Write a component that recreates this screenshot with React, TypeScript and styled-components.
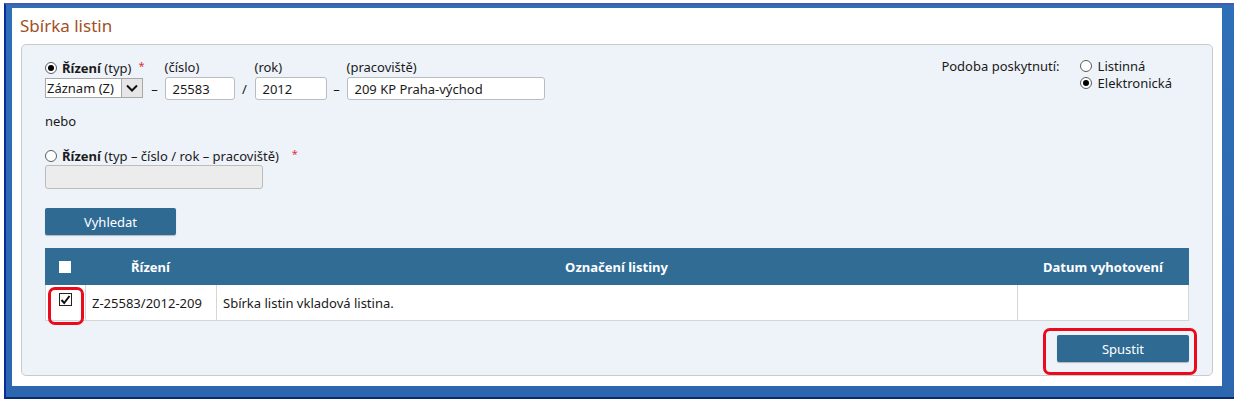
import styled, { createGlobalStyle } from "styled-components";

const GlobalStyle = createGlobalStyle`
  html, body {
    margin: 0;
    padding: 0;
    background: #ffffff;
  }

  body {
    font-family: "Noto Sans", "Open Sans", sans-serif;
    font-size: 13px;
    color: #1a1a1a;
  }
`;

const Frame = styled.div`
  margin: 3px 2px 0 4px;
  height: 396px;
  box-sizing: border-box;

  padding: 3px 12px 11px 6px;

  background: linear-gradient(180deg, #2f6fb7 0%, #2c66ae 100%);
  border-top: 2px solid #4c58b0;
  border-left: 2px solid #0c2a9a;
  border-bottom: 2px solid #0b2a6c;
`;

const Window = styled.div`
  display: flex;
  flex-direction: column;

  height: 100%;
  box-sizing: border-box;
  padding: 6px 9px 10px 9px;

  background-color: white;
`;

const Title = styled.div`
  height: 31px;
  margin-left: -1px;

  font-size: 17px;
  color: #a2501e;
`;

const Panel = styled.div`
  flex: 1;

  display: flex;
  flex-direction: column;

  padding: 14px 23px 13px 23px;

  background-color: #eef3f9;
  border: 1px solid #c9cacc;
  border-radius: 5px;
`;

const TopRow = styled.div`
  display: flex;
  justify-content: space-between;
  align-items: flex-start;
`;

const Fields = styled.div`
  display: flex;
  align-items: flex-end;
`;

const Field = styled.div`
  display: flex;
  flex-direction: column;
  gap: 2px;
`;

const Label = styled.div`
  display: flex;
  align-items: center;
  gap: 3px;

  height: 16px;
  line-height: 16px;
  white-space: nowrap;
`;

const Strong = styled.b`
  font-weight: 700;
`;

const Required = styled.span`
  margin-left: 4px;

  color: #d9363e;
  font-size: 11px;
  position: relative;
  top: -2px;
`;

const Separator = styled.div`
  width: 20px;
  height: 23px;

  display: flex;
  align-items: center;
  justify-content: center;
`;

interface InputProps {
  width: number;
}

const TextInput = styled.div<InputProps>`
  display: flex;
  align-items: center;

  width: ${({ width }) => width}px;
  height: 23px;
  box-sizing: border-box;
  padding-left: 7px;

  background-color: white;
  border: 1px solid #b9bcc0;
  border-radius: 3px;
`;

const Select = styled.div`
  display: flex;
  align-items: stretch;

  width: 98px;
  height: 20px;
  margin-bottom: 2px;
  box-sizing: border-box;

  background-color: white;
  border: 1px solid #a8a8a8;
`;

const SelectText = styled.div`
  flex: 1;
  display: flex;
  align-items: center;
  padding-left: 1px;
`;

const SelectButton = styled.div`
  display: flex;
  align-items: center;
  justify-content: center;

  width: 20px;

  background-color: #e6e6e6;
  border-left: 1px solid #a8a8a8;
`;

const RadioCircle = styled.span<{ checked: boolean }>`
  position: relative;
  display: inline-block;
  flex-shrink: 0;

  width: 12px;
  height: 12px;
  box-sizing: border-box;
  margin-right: 2px;

  background-color: white;
  border: 1px solid #5c5c5c;
  border-radius: 50%;

  &::after {
    content: "";
    display: ${({ checked }) => (checked ? "block" : "none")};
    position: absolute;
    left: 2px;
    top: 2px;
    width: 6px;
    height: 6px;
    border-radius: 50%;
    background-color: #000;
  }
`;

const Podoba = styled.div`
  display: flex;
  gap: 20px;

  margin-right: 17px;
  margin-top: -1px;
`;

const RadioList = styled.div`
  display: flex;
  flex-direction: column;
  gap: 1px;
`;

const RadioOption = styled.div`
  display: flex;
  align-items: center;
  gap: 4px;

  height: 16px;
`;

const Nebo = styled.div`
  margin-top: 13px;
  line-height: 16px;
`;

const AltField = styled.div`
  display: flex;
  flex-direction: column;

  margin-top: 19px;
`;

const DisabledInput = styled.div`
  width: 218px;
  height: 24px;
  box-sizing: border-box;
  margin-top: 1px;

  background-color: #ececec;
  border: 1px solid #bcbcbc;
  border-radius: 3px;
`;

const Button = styled.div<{ width: number }>`
  display: flex;
  align-items: center;
  justify-content: center;

  width: ${({ width }) => width}px;
  height: 27px;

  color: white;
  background-color: #2f6a93;
  border-radius: 2px;
  box-shadow: 0 1px 1px rgba(0, 0, 0, 0.25);
`;

const SearchButton = styled(Button)`
  margin-top: 19px;
`;

const Table = styled.div`
  display: grid;
  grid-template-columns: 40px 131px 801px 1fr;

  margin-top: 13px;
`;

const HeadCell = styled.div`
  display: flex;
  align-items: center;
  justify-content: center;

  height: 37px;

  font-weight: 700;
  color: white;
  background-color: #316c95;
`;

interface CellProps {
  center?: boolean;
}

const Cell = styled.div<CellProps>`
  position: relative;
  display: flex;
  align-items: center;
  justify-content: ${({ center }) => (center ? "center" : "flex-start")};

  height: 36px;
  box-sizing: border-box;
  padding-left: ${({ center }) => (center ? "0" : "6px")};

  background-color: white;
  border-bottom: 1px solid #d6d6d6;
  border-left: 1px solid #d6d6d6;

  &:last-child {
    border-right: 1px solid #d6d6d6;
  }
`;

const HeadBox = styled.span`
  display: inline-block;
  width: 12px;
  height: 12px;
  margin-left: -1px;

  background-color: white;
`;

const CheckBox = styled.span`
  display: flex;
  align-items: center;
  justify-content: center;

  width: 13px;
  height: 13px;
  box-sizing: border-box;
  margin-left: -1px;
  margin-top: -6px;

  background-color: white;
  border: 1px solid #222;
`;

const Highlight = styled.div`
  position: absolute;

  border: 3px solid #ea0a1c;
  border-radius: 7px;
  pointer-events: none;
`;

const RowHighlight = styled(Highlight)`
  left: 2px;
  top: 2px;
  width: 36px;
  height: 38px;
  box-sizing: border-box;
  z-index: 2;
`;

const Footer = styled.div`
  display: flex;
  justify-content: flex-end;

  margin-top: 14px;
`;

const RunWrap = styled.div`
  position: relative;
`;

const RunHighlight = styled(Highlight)`
  left: -14px;
  top: -7px;
  right: -8px;
  bottom: -13px;
`;

const Chevron = () => (
  <svg width="12" height="8" viewBox="0 0 12 8">
    <path d="M1 1.5 L6 6.5 L11 1.5" fill="none" stroke="#111" strokeWidth="2" />
  </svg>
);

const Tick = () => (
  <svg width="11" height="10" viewBox="0 0 11 10">
    <path d="M1.5 5 L4.2 8 L9.5 1" fill="none" stroke="#111" strokeWidth="2" />
  </svg>
);

const App = () => {
  return (
    <>
      <GlobalStyle />
      <Frame>
        <Window>
          <Title>Sbírka listin</Title>
          <Panel>
            <TopRow>
              <Fields>
                <Field>
                  <Label>
                    <RadioCircle checked />
                    <span>
                      <Strong>Řízení</Strong> (typ)
                    </span>
                    <Required>*</Required>
                  </Label>
                  <Select>
                    <SelectText>Záznam (Z)</SelectText>
                    <SelectButton>
                      <Chevron />
                    </SelectButton>
                  </Select>
                </Field>
                <Separator>–</Separator>
                <Field>
                  <Label>(číslo)</Label>
                  <TextInput width={70}>25583</TextInput>
                </Field>
                <Separator>/</Separator>
                <Field>
                  <Label>(rok)</Label>
                  <TextInput width={72}>2012</TextInput>
                </Field>
                <Separator>–</Separator>
                <Field>
                  <Label>(pracoviště)</Label>
                  <TextInput width={198}>209 KP Praha-východ</TextInput>
                </Field>
              </Fields>
              <Podoba>
                <Label>Podoba poskytnutí:</Label>
                <RadioList>
                  <RadioOption>
                    <RadioCircle checked={false} />
                    Listinná
                  </RadioOption>
                  <RadioOption>
                    <RadioCircle checked />
                    Elektronická
                  </RadioOption>
                </RadioList>
              </Podoba>
            </TopRow>

            <Nebo>nebo</Nebo>

            <AltField>
              <Label>
                <RadioCircle checked={false} />
                <span>
                  <Strong>Řízení</Strong> (typ – číslo / rok – pracoviště)
                </span>
                <Required>&nbsp;&nbsp;*</Required>
              </Label>
              <DisabledInput />
            </AltField>

            <SearchButton width={131}>Vyhledat</SearchButton>

            <Table>
              <HeadCell>
                <HeadBox />
              </HeadCell>
              <HeadCell>Řízení</HeadCell>
              <HeadCell>Označení listiny</HeadCell>
              <HeadCell>Datum vyhotovení</HeadCell>

              <Cell center>
                <CheckBox>
                  <Tick />
                </CheckBox>
                <RowHighlight />
              </Cell>
              <Cell>Z-25583/2012-209</Cell>
              <Cell>Sbírka listin vkladová listina.</Cell>
              <Cell />
            </Table>

            <Footer>
              <RunWrap>
                <Button width={132}>Spustit</Button>
                <RunHighlight />
              </RunWrap>
            </Footer>
          </Panel>
        </Window>
      </Frame>
    </>
  );
};

export default App;
